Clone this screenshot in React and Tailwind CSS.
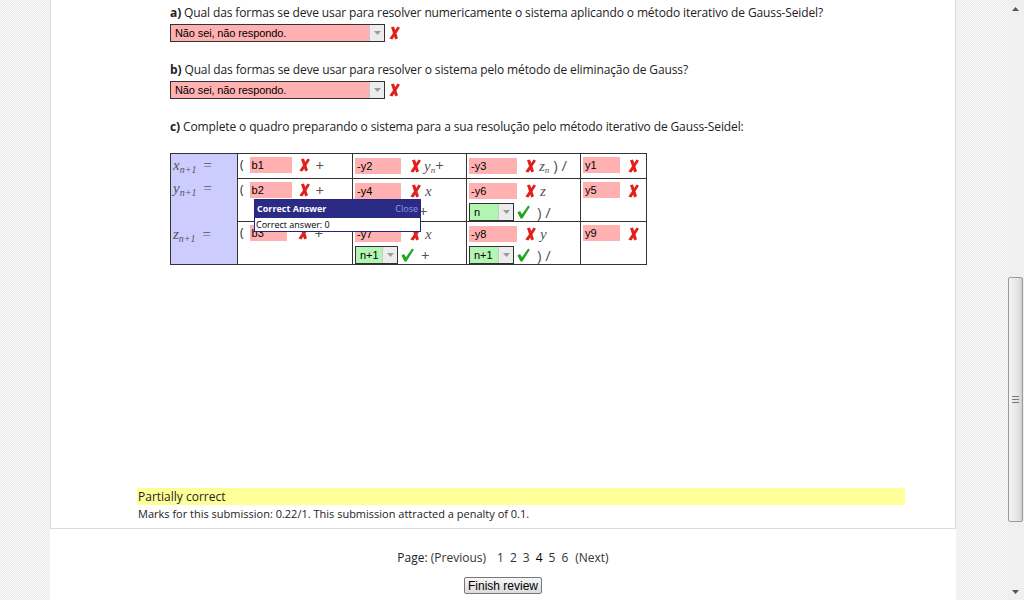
import React from 'react';

const body = { fontFamily: '"Open Sans", "DejaVu Sans", sans-serif' };
const arial = { fontFamily: '"Liberation Sans", Arial, sans-serif' };
const serif = { fontFamily: '"Liberation Serif", "Times New Roman", serif' };

function Cross() {
  return (
    <svg width="11" height="14" viewBox="0 0 11 14" className="inline-block shrink-0">
      <path d="M2 1.2 L5 0.6 L9 12.2 L6.2 13.4 Z" fill="#e0201b" />
      <path d="M8.6 0.6 L11 1.8 L3.4 13.4 L0.4 12.6 Z" fill="#e0201b" />
    </svg>
  );
}

function Tick() {
  return (
    <svg width="13" height="14" viewBox="0 0 13 14" className="inline-block shrink-0">
      <path d="M0.4 7.4 L3 6 L5 9.2 L11.2 0.6 L12.8 1.8 L5.4 13.4 L3.6 13.4 Z" fill="#1fa51f" />
    </svg>
  );
}

function Arrow() {
  return (
    <span className="flex h-full w-[15px] items-center justify-center border-l border-[#c8c8c8] bg-[#ececec]">
      <svg width="7" height="4" viewBox="0 0 7 4"><path d="M0 0 H7 L3.5 4 Z" fill="#9a9a9a" /></svg>
    </span>
  );
}

function Select({ text, ok, w }) {
  return (
    <span
      className={`inline-flex h-[18px] items-stretch border border-[#333] ${ok ? 'bg-[#b3f5b3]' : 'bg-[#ffb0b0]'} text-[11px] text-black`}
      style={{ ...arial, width: w }}
    >
      <span className="flex-1 pl-[4px] leading-[16px]">{text}</span>
      <Arrow />
    </span>
  );
}

function Field({ v, w }) {
  return (
    <span className="inline-block h-[16px] bg-[#ffb0b0] pl-[2px] text-[11px] leading-[16px] text-black" style={{ ...arial, width: w }}>
      {v}
    </span>
  );
}

function Sub({ v, s }) {
  return (
    <span className="italic" style={serif}>
      {v}<sub className="text-[9px]">{s}</sub>
    </span>
  );
}

function Label({ v }) {
  return (
    <div className="flex items-start gap-[7px] pl-[2px] text-[15px] leading-[16px] text-[#555]" style={serif}>
      <span className="italic">{v}<sub className="text-[10px] italic">n+1</sub></span>
      <span>=</span>
    </div>
  );
}

function Cell({ children, last, bottom }) {
  return (
    <div className={`pl-[2px] pt-[3px] ${last ? '' : 'border-r'} ${bottom ? '' : 'border-b'} border-[#333]`}>
      {children}
    </div>
  );
}

const mathTxt = 'text-[15px] leading-[16px] text-[#555]';

export default function App() {
  return (
    <div className="flex h-[600px] w-[1024px] overflow-hidden bg-white text-[#222]" style={body}>
      <div className="w-[50px] bg-[image:repeating-conic-gradient(#e9e9e9_0_25%,#fbfbfb_0_50%)] bg-[length:2px_2px]" />

      <div className="flex w-[906px] flex-col">
        <div className="h-[529px] border-x border-b border-[#dcdcdc] bg-white pl-[86px] pt-[5px]">
          <div className="ml-[33px] text-[12px] leading-[16px] tracking-[-0.12px]">
            <p><b className="font-bold">a)</b> Qual das formas se deve usar para resolver numericamente o sistema aplicando o método iterativo de Gauss-Seidel?</p>
            <div className="mt-[3px] flex items-center gap-[4px]">
              <Select text="Não sei, não respondo." w={215} />
              <Cross />
            </div>

            <p className="mt-[20px]"><b className="font-bold">b)</b> Qual das formas se deve usar para resolver o sistema pelo método de eliminação de Gauss?</p>
            <div className="mt-[3px] flex items-center gap-[4px]">
              <Select text="Não sei, não respondo." w={215} />
              <Cross />
            </div>

            <p className="mt-[20px]"><b className="font-bold">c)</b> Complete o quadro preparando o sistema para a sua resolução pelo método iterativo de Gauss-Seidel:</p>

            <div className="relative mt-[18px] flex w-[477px] border border-[#333] tracking-normal">
              <div className="flex w-[67px] flex-col border-r border-[#333] bg-[#ccccff]">
                <div className="h-[24px] pt-[3px]"><Label v="x" /></div>
                <div className="h-[43px] pt-[2px]"><Label v="y" /></div>
                <div className="h-[43px] pt-[5px]"><Label v="z" /></div>
              </div>
              <div className="grid flex-1 grid-cols-[115px_114px_114px_1fr] grid-rows-[25px_43px_42px]">
                <Cell>
                  <div className="flex items-center gap-[6px]"><span className="text-[12px]">(</span><span className="flex items-center gap-[7px]"><Field v="b1" w={42} /><Cross /></span><span className={mathTxt}>+</span></div>
                </Cell>
                <Cell>
                  <div className="flex items-center"><Field v="-y2" w={46} /><span className="ml-[9px]"><Cross /></span><span className={`ml-[3px] ${mathTxt}`}><Sub v="y" s="n" />+</span></div>
                </Cell>
                <Cell>
                  <div className="flex items-center"><Field v="-y3" w={48} /><span className="ml-[8px]"><Cross /></span><span className={`ml-[3px] ${mathTxt}`}><Sub v="z" s="n" /> ) /</span></div>
                </Cell>
                <Cell last>
                  <div className="flex items-center"><Field v="y1" w={37} /><span className="ml-[8px]"><Cross /></span></div>
                </Cell>

                <Cell>
                  <div className="flex items-center gap-[6px]"><span className="text-[12px]">(</span><span className="flex items-center gap-[7px]"><Field v="b2" w={42} /><Cross /></span><span className={mathTxt}>+</span></div>
                </Cell>
                <Cell>
                  <div className="flex items-center"><Field v="-y4" w={46} /><span className="ml-[9px]"><Cross /></span><span className={`ml-[4px] ${mathTxt}`}><Sub v="x" s="" /></span></div>
                  <div className="mt-[4px] flex items-center pl-[64px]"><span className={mathTxt}>+</span></div>
                </Cell>
                <Cell>
                  <div className="flex items-center"><Field v="-y6" w={48} /><span className="ml-[8px]"><Cross /></span><span className={`ml-[4px] ${mathTxt}`}><Sub v="z" s="" /></span></div>
                  <div className="mt-[4px] flex items-center gap-[3px]"><Select text="n" ok w={45} /><Tick /><span className={`ml-[4px] ${mathTxt}`}>) /</span></div>
                </Cell>
                <Cell last>
                  <div className="flex items-center"><Field v="y5" w={37} /><span className="ml-[8px]"><Cross /></span></div>
                </Cell>

                <Cell bottom>
                  <div className="flex items-center gap-[6px]"><span className="text-[12px]">(</span><span className="flex items-center gap-[11px]"><Field v="b3" w={37} /><Cross /></span><span className={mathTxt}>+</span></div>
                </Cell>
                <Cell bottom>
                  <div className="flex items-center"><Field v="-y7" w={46} /><span className="ml-[9px]"><Cross /></span><span className={`ml-[4px] ${mathTxt}`}><Sub v="x" s="" /></span></div>
                  <div className="mt-[4px] flex items-center gap-[3px]"><Select text="n+1" ok w={43} /><Tick /><span className={`ml-[4px] ${mathTxt}`}>+</span></div>
                </Cell>
                <Cell bottom>
                  <div className="flex items-center"><Field v="-y8" w={48} /><span className="ml-[8px]"><Cross /></span><span className={`ml-[4px] ${mathTxt}`}><Sub v="y" s="" /></span></div>
                  <div className="mt-[4px] flex items-center gap-[3px]"><Select text="n+1" ok w={45} /><Tick /><span className={`ml-[4px] ${mathTxt}`}>) /</span></div>
                </Cell>
                <Cell last bottom>
                  <div className="flex items-center"><Field v="y9" w={37} /><span className="ml-[8px]"><Cross /></span></div>
                </Cell>
              </div>

              <div className="absolute left-[83px] top-[45px] w-[167px] border border-[#25257a] bg-white" style={body}>
                <div className="flex h-[18px] items-center justify-between bg-[#2b2b85] px-[2px] text-[9px]">
                  <span className="font-bold text-white">Correct Answer</span>
                  <span className="text-[#9a9ae6]">Close</span>
                </div>
                <div className="h-[13px] px-[1px] text-[9px] leading-[13px] text-black">Correct answer: 0</div>
              </div>
            </div>
          </div>

          <div className="mt-[223px] w-[768px] bg-[#ffff99] pl-[1px] text-[12px] leading-[17px]">Partially correct</div>
          <div className="mt-[1px] pl-[1px] text-[11px] leading-[16px]">Marks for this submission: 0.22/1. This submission attracted a penalty of 0.1.</div>
        </div>

        <div className="flex flex-col items-center pt-[21px]">
          <div className="text-[12px] leading-[16px] text-[#222]">
            Page: <span className="text-[#333]">(Previous)</span>
            <span className="ml-[11px] inline-flex gap-[6px] text-[#333]">
              <span>1</span><span>2</span><span>3</span><span className="text-black">4</span><span>5</span><span>6</span>
            </span>
            <span className="ml-[7px] text-[#333]">(Next)</span>
          </div>
          <button className="mt-[11px] h-[17px] rounded-[2px] border border-[#777] bg-[linear-gradient(#f6f6f6,#dcdcdc)] px-[3px] text-[12px] leading-[14px] text-black" style={arial}>
            Finish review
          </button>
        </div>
      </div>

      <div className="w-[51px] bg-[image:repeating-conic-gradient(#e9e9e9_0_25%,#fbfbfb_0_50%)] bg-[length:2px_2px]" />

      <div className="flex w-[17px] flex-col bg-[#f0f0f0]">
        <div className="flex h-[17px] items-center justify-center">
          <svg width="7" height="4" viewBox="0 0 7 4"><path d="M0 4 H7 L3.5 0 Z" fill="#555" /></svg>
        </div>
        <div className="h-[260px]" />
        <div className="mx-[1px] flex h-[245px] items-center justify-center rounded-[2px] border border-[#9a9a9a] bg-[linear-gradient(90deg,#f4f4f4,#e4e4e4_70%,#cfcfcf)]">
          <svg width="7" height="7" viewBox="0 0 7 7"><path d="M0 0.5 H7 M0 3.5 H7 M0 6.5 H7" stroke="#777" strokeWidth="1" /></svg>
        </div>
        <div className="flex-1" />
        <div className="flex h-[17px] items-center justify-center">
          <svg width="7" height="4" viewBox="0 0 7 4"><path d="M0 0 H7 L3.5 4 Z" fill="#555" /></svg>
        </div>
      </div>
    </div>
  );
}
